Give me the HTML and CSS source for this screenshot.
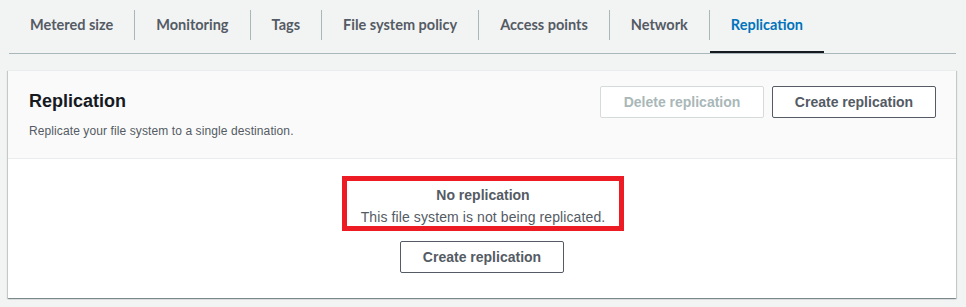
FILE: index.html
```html
<!DOCTYPE html>
<html>
<head>
<meta charset="utf-8">
<link rel="stylesheet" href="styles.css">
</head>
<body>
<div class="page">
  <div class="tabs">
    <div class="tab">Metered size</div>
    <div class="tab">Monitoring</div>
    <div class="tab">Tags</div>
    <div class="tab">File system policy</div>
    <div class="tab">Access points</div>
    <div class="tab">Network</div>
    <div class="tab active">Replication</div>
  </div>
  <div class="panel">
    <div class="panel-header">
      <div class="header-text">
        <h2 class="title">Replication</h2>
        <p class="desc">Replicate your file system to a single destination.</p>
      </div>
      <div class="actions">
        <button class="btn disabled">Delete replication</button>
        <button class="btn">Create replication</button>
      </div>
    </div>
    <div class="panel-body">
      <div class="empty-box">
        <div class="empty-title">No replication</div>
        <div class="empty-text">This file system is not being replicated.</div>
      </div>
      <button class="btn">Create replication</button>
    </div>
  </div>
</div>
</body>
</html>
```
FILE: styles.css
```css
* { box-sizing: border-box; }
html, body { margin: 0; padding: 0; }
body {
  background: #f2f3f3;
  font-family: "Liberation Sans", Arial, sans-serif;
  color: #16191f;
  width: 966px;
  height: 307px;
  overflow: hidden;
}
.page { padding: 10px 10px 0 9px; }
.tabs {
  display: flex;
  border-bottom: 1px solid #aab7b8;
  height: 44px;
  width: 947px;
}
.tab {
  font-family: Lato, "Liberation Sans", sans-serif;
  font-size: 14.5px;
  font-weight: 700;
  color: #545b64;
  padding: 0 21px 0 21px;
  height: 43px;
  display: flex;
  align-items: flex-start;
  line-height: 30px;
  position: relative;
}
.tab + .tab { border-left: 1px solid #aab7b8; height: 30px; }
.tab.active { color: #0073bb; }
.tab.active::after {
  content: "";
  position: absolute;
  left: 0; right: 0; bottom: -13px;
  height: 2px;
  background: #16191f;
}
.panel {
  margin-top: 16px;
  margin-left: -1px;
  width: 948px;
  background: #fff;
  box-shadow: 0 1px 1px 0 rgba(0,28,36,.3), 1px 1px 1px 0 rgba(0,28,36,.15), -1px 1px 1px 0 rgba(0,28,36,.15);
  border-top: 1px solid #eaeded;
}
.panel-header {
  background: #fafafa;
  border-bottom: 1px solid #eaeded;
  display: flex;
  justify-content: space-between;
  padding: 14px 20px 18px 21px;
  height: 88px;
}
.title { margin: 4px 0 0; font-size: 18px; font-weight: 700; line-height: 24px; color: #16191f; }
.desc { margin: 10px 0 0; font-size: 12px; line-height: 16px; color: #545b64; font-weight: 400; letter-spacing: 0.1px; }
.actions { display: flex; gap: 8px; align-items: flex-start; margin-top: 1px; }
.btn {
  font-family: inherit;
  font-size: 14px;
  font-weight: 700;
  color: #545b64;
  background: #fff;
  border: 1px solid #545b64;
  border-radius: 2px;
  height: 32px;
  width: 164px;
  padding: 0;
  cursor: pointer;
}
.btn.disabled { color: #aab7b8; border-color: #d5dbdb; }
.panel-body {
  display: flex;
  flex-direction: column;
  align-items: center;
  padding: 17px 0 24px;
  height: 139px;
}
.empty-box {
  border: 5px solid #ed1c24;
  width: 282px;
  height: 55px;
  margin-left: 2px;
  text-align: center;
  color: #545b64;
  padding: 3px 0 0;
  margin-bottom: 10px;
}
.empty-title { font-size: 14px; font-weight: 700; line-height: 22px; }
.empty-text { font-size: 14px; line-height: 22px; letter-spacing: 0.1px; }
```
